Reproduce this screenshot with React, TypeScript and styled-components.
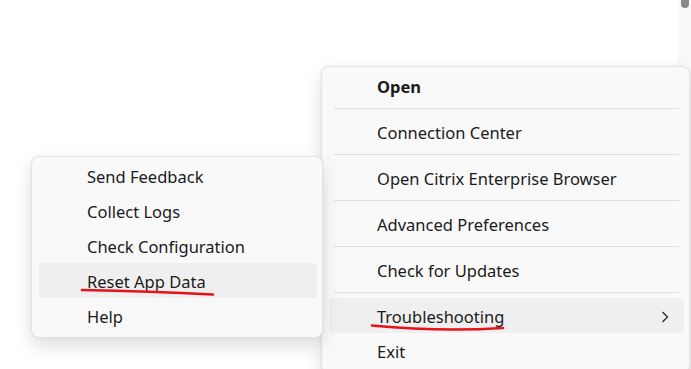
import React from 'react';
import styled, { createGlobalStyle } from 'styled-components';

const GlobalStyle = createGlobalStyle`
  html, body {
    margin: 0;
    padding: 0;
    background: #ffffff;
  }
  body {
    font-family: 'Noto Sans', 'Liberation Sans', sans-serif;
    color: #1b1b1b;
  }
`;

const Desktop = styled.div`
  position: relative;
  width: 691px;
  height: 369px;
  overflow: hidden;
  background: #ffffff;
`;

const ScrollTrack = styled.div`
  position: absolute;
  top: 0;
  right: 0;
  width: 14px;
  height: 100%;
  background: #f9f9f9;
`;

const ScrollThumb = styled.div`
  margin: -6px 0 0 4px;
  width: 8px;
  height: 14px;
  border-radius: 4px;
  background: #8a8a8a;
`;

const Menu = styled.div<{ $left: number; $top: number; $width: number; $z: number }>`
  position: absolute;
  left: ${(p) => p.$left}px;
  top: ${(p) => p.$top}px;
  width: ${(p) => p.$width}px;
  z-index: ${(p) => p.$z};
  box-sizing: border-box;
  display: flex;
  flex-direction: column;
  padding: 1px 0 4px;
  background: #f9f9f9;
  border: 1px solid #e3e3e3;
  border-radius: 8px;
  box-shadow: 0 8px 18px rgba(0, 0, 0, 0.13), 0 0 3px rgba(0, 0, 0, 0.05);
`;

const Item = styled.div<{ $active?: boolean; $bold?: boolean }>`
  display: flex;
  align-items: center;
  box-sizing: border-box;
  height: 35px;
  margin: 0 5px 0 7px;
  padding: 2px 15px 0 48px;
  border-radius: 4px;
  font-size: 16.5px;
  font-weight: ${(p) => (p.$bold ? 700 : 400)};
  background: ${(p) => (p.$active ? '#efefef' : 'transparent')};
  white-space: nowrap;
`;

const Chevron = styled.svg`
  margin-left: auto;
  width: 8px;
  height: 12px;
`;

const Separator = styled.div`
  height: 1px;
  margin: 5px 10px 5px 12px;
  background: #dedede;
`;

const Scribbles = styled.svg`
  position: absolute;
  left: 0;
  top: 0;
  z-index: 5;
  pointer-events: none;
`;

const mainItems = [
  'Connection Center',
  'Open Citrix Enterprise Browser',
  'Advanced Preferences',
  'Check for Updates',
];

const troubleItems = ['Send Feedback', 'Collect Logs', 'Check Configuration', 'Reset App Data', 'Help'];

export default function App() {
  return (
    <Desktop>
      <GlobalStyle />
      <ScrollTrack>
        <ScrollThumb />
      </ScrollTrack>

      <Menu $left={321} $top={66} $width={369} $z={1}>
        <Item $bold>Open</Item>
        {mainItems.map((label) => (
          <React.Fragment key={label}>
            <Separator />
            <Item>{label}</Item>
          </React.Fragment>
        ))}
        <Separator />
        <Item $active>
          Troubleshooting
          <Chevron viewBox="0 0 8 12">
            <path d="M1.5 1 L6.5 6 L1.5 11" fill="none" stroke="#2a2a2a" strokeWidth="1.3" />
          </Chevron>
        </Item>
        <Item>Exit</Item>
      </Menu>

      <Menu $left={31} $top={156} $width={292} $z={2}>
        {troubleItems.map((label) => (
          <Item key={label} $active={label === 'Reset App Data'}>
            {label}
          </Item>
        ))}
      </Menu>

      <Scribbles width="691" height="369" viewBox="0 0 691 369">
        <path d="M82 290 Q150 291 213 294.5" fill="none" stroke="#e3121b" strokeWidth="2.6" strokeLinecap="round" />
        <path d="M372 325.5 Q440 332 503 328" fill="none" stroke="#e3121b" strokeWidth="2.6" strokeLinecap="round" />
      </Scribbles>
    </Desktop>
  );
}
